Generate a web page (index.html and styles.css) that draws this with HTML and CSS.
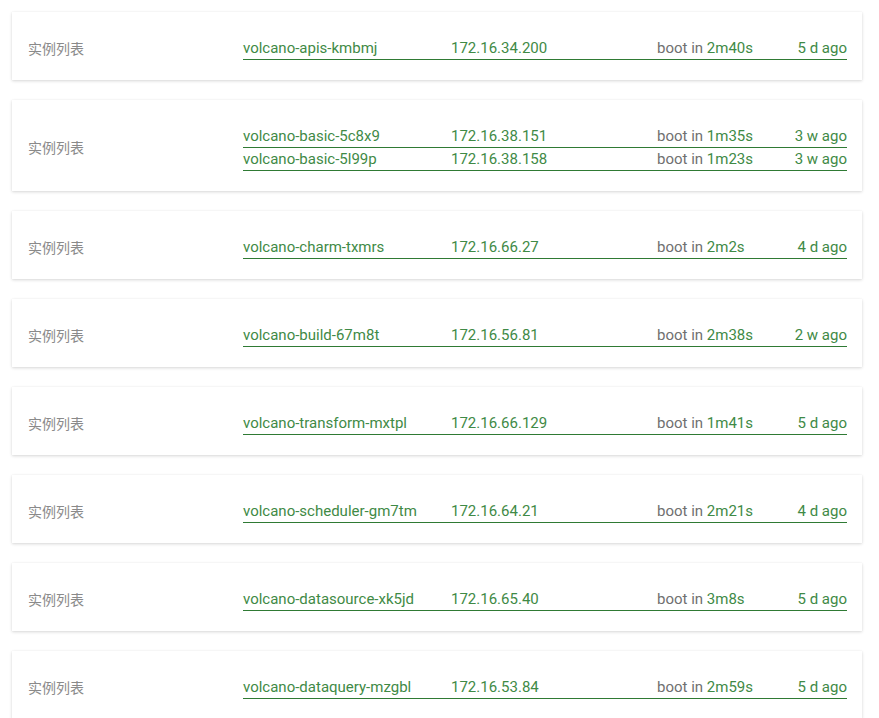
FILE: index.html
```html
<!DOCTYPE html>
<html lang="zh">
<head>
<meta charset="utf-8">
<link rel="stylesheet" href="styles.css">
</head>
<body>
<div class="list">
  <div class="card">
    <div class="label">实例列表</div>
    <div class="rows">
      <div class="row"><span class="name">volcano-apis-kmbmj</span><span class="ip">172.16.34.200</span><span class="boot">boot in <em>2m40s</em></span><span class="age">5 d ago</span></div>
    </div>
  </div>
  <div class="card">
    <div class="label">实例列表</div>
    <div class="rows">
      <div class="row"><span class="name">volcano-basic-5c8x9</span><span class="ip">172.16.38.151</span><span class="boot">boot in <em>1m35s</em></span><span class="age">3 w ago</span></div>
      <div class="row"><span class="name">volcano-basic-5l99p</span><span class="ip">172.16.38.158</span><span class="boot">boot in <em>1m23s</em></span><span class="age">3 w ago</span></div>
    </div>
  </div>
  <div class="card">
    <div class="label">实例列表</div>
    <div class="rows">
      <div class="row"><span class="name">volcano-charm-txmrs</span><span class="ip">172.16.66.27</span><span class="boot">boot in <em>2m2s</em></span><span class="age">4 d ago</span></div>
    </div>
  </div>
  <div class="card">
    <div class="label">实例列表</div>
    <div class="rows">
      <div class="row"><span class="name">volcano-build-67m8t</span><span class="ip">172.16.56.81</span><span class="boot">boot in <em>2m38s</em></span><span class="age">2 w ago</span></div>
    </div>
  </div>
  <div class="card">
    <div class="label">实例列表</div>
    <div class="rows">
      <div class="row"><span class="name">volcano-transform-mxtpl</span><span class="ip">172.16.66.129</span><span class="boot">boot in <em>1m41s</em></span><span class="age">5 d ago</span></div>
    </div>
  </div>
  <div class="card">
    <div class="label">实例列表</div>
    <div class="rows">
      <div class="row"><span class="name">volcano-scheduler-gm7tm</span><span class="ip">172.16.64.21</span><span class="boot">boot in <em>2m21s</em></span><span class="age">4 d ago</span></div>
    </div>
  </div>
  <div class="card">
    <div class="label">实例列表</div>
    <div class="rows">
      <div class="row"><span class="name">volcano-datasource-xk5jd</span><span class="ip">172.16.65.40</span><span class="boot">boot in <em>3m8s</em></span><span class="age">5 d ago</span></div>
    </div>
  </div>
  <div class="card">
    <div class="label">实例列表</div>
    <div class="rows">
      <div class="row"><span class="name">volcano-dataquery-mzgbl</span><span class="ip">172.16.53.84</span><span class="boot">boot in <em>2m59s</em></span><span class="age">5 d ago</span></div>
    </div>
  </div>
</div>
</body>
</html>
```
FILE: styles.css
```css
html, body {
  margin: 0;
  padding: 0;
  background: #ffffff;
}
body {
  font-family: Roboto, "Noto Sans CJK SC", sans-serif;
  font-size: 15px;
}
.list {
  display: flex;
  flex-direction: column;
  gap: 20px;
  padding: 12px 17px 40px 12px;
}
.card {
  display: flex;
  align-items: center;
  padding: 25px 15px 20px 16px;
  background: #fff;
  box-shadow: 0 1px 3px rgba(0, 0, 0, 0.16), 0 0 1px rgba(0, 0, 0, 0.06);
}
.label {
  width: 215px;
  flex: none;
  font-family: "Noto Sans CJK SC", sans-serif;
  font-size: 14px;
  line-height: 20px;
  margin-bottom: 2px;
  color: #8a8a8a;
}
.rows {
  flex: 1;
  display: flex;
  flex-direction: column;
}
.row {
  display: grid;
  grid-template-columns: 208px 206px 1fr auto;
  height: 22px;
  line-height: 22px;
  border-bottom: 1px solid #2f7a34;
  color: #3f8a46;
  white-space: nowrap;
}
.boot {
  color: #707070;
}
.boot em {
  font-style: normal;
  color: #3f8a46;
}
.age {
  text-align: right;
}
```
